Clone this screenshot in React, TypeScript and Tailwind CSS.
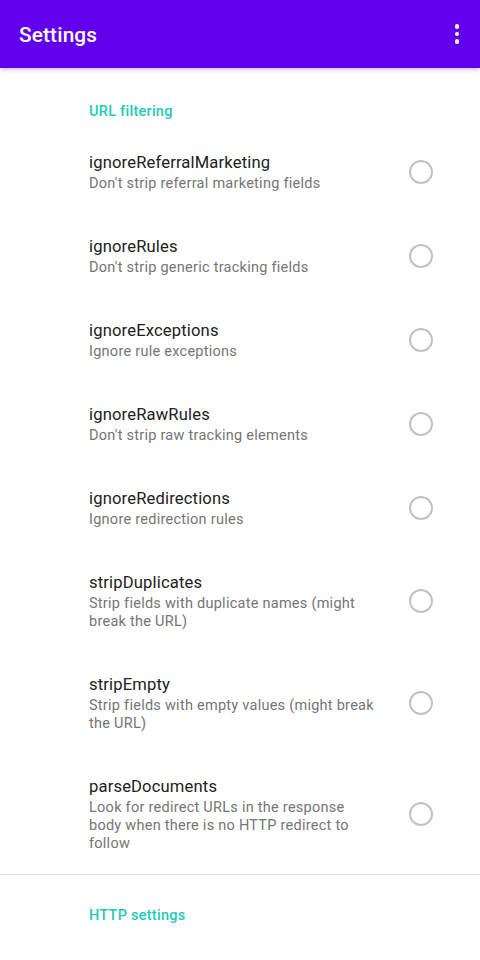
const items = [
  { key: "ignoreReferralMarketing", summary: "Don't strip referral marketing fields" },
  { key: "ignoreRules", summary: "Don't strip generic tracking fields" },
  { key: "ignoreExceptions", summary: "Ignore rule exceptions" },
  { key: "ignoreRawRules", summary: "Don't strip raw tracking elements" },
  { key: "ignoreRedirections", summary: "Ignore redirection rules" },
  { key: "stripDuplicates", summary: "Strip fields with duplicate names (might break the URL)" },
  { key: "stripEmpty", summary: "Strip fields with empty values (might break the URL)" },
  {
    key: "parseDocuments",
    summary: "Look for redirect URLs in the response body when there is no HTTP redirect to follow",
  },
];

function Category({ label, spacing }: { label: string; spacing: string }) {
  return (
    <div className={`pl-[89px] ${spacing}`}>
      <p className="text-[14.5px] leading-[20px] font-medium tracking-[0.26px] text-[#1fc9b8]">
        {label}
      </p>
    </div>
  );
}

function PrefRow({ title, summary }: { title: string; summary: string }) {
  return (
    <div className="flex items-center pt-[21px] pb-[20px] pl-[89px]">
      <div className="w-[288px]">
        <p className="text-[16.6px] leading-[25px] tracking-[0.15px] text-[#212121]">{title}</p>
        <p className="text-[14.5px] leading-[18px] tracking-[0.26px] text-[#757575]">{summary}</p>
      </div>
      <div className="ml-auto mr-[47px] h-[24px] w-[24px] rounded-full border-[2.5px] border-[#c2c2c2]" />
    </div>
  );
}

export default function App() {
  return (
    <div
      className="h-[960px] w-[480px] overflow-hidden bg-white"
      style={{ fontFamily: "Roboto, 'Noto Sans', sans-serif" }}
    >
      <header className="relative z-10 flex h-[68px] items-center justify-between bg-[#6200ee] pl-[19px] pr-[21px] shadow-[0_2px_4px_rgba(98,0,238,0.25)]">
        <h1 className="pt-[4px] text-[20.8px] font-medium tracking-[0.15px] text-white">Settings</h1>
        <div className="flex flex-col items-center gap-[3px]">
          <span className="h-[4.5px] w-[4.5px] rounded-full bg-white" />
          <span className="h-[4.5px] w-[4.5px] rounded-full bg-white" />
          <span className="h-[4.5px] w-[4.5px] rounded-full bg-white" />
        </div>
      </header>

      <Category label="URL filtering" spacing="pt-[34px] pb-[7px]" />
      {items.map((it) => (
        <PrefRow key={it.key} title={it.key} summary={it.summary} />
      ))}
      <div className="mt-[1px] border-t border-[#e0e0e0]" />
      <Category label="HTTP settings" spacing="pt-[31px]" />
    </div>
  );
}
